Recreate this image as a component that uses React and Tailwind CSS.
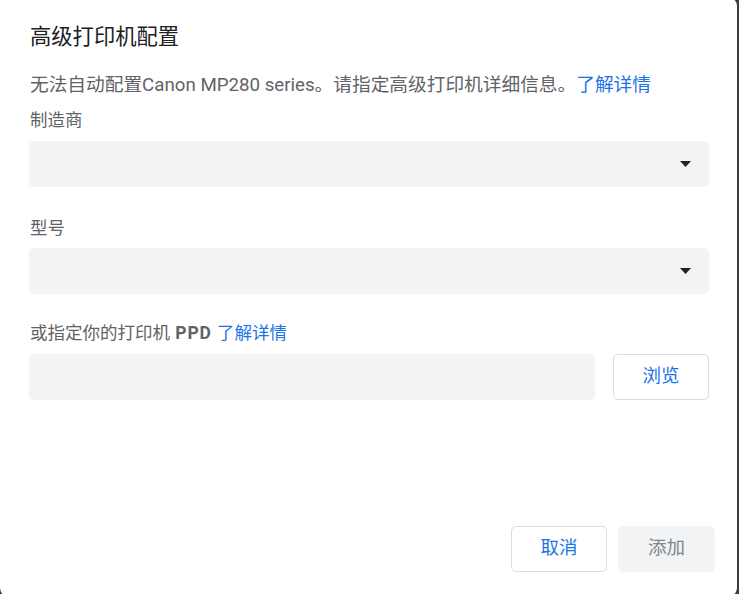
import React from "react";

const FONT = { fontFamily: 'Roboto, "Noto Sans CJK SC", "Noto Sans", sans-serif' };

function Caret() {
  return (
    <svg width="11" height="6" viewBox="0 0 11 6" className="shrink-0">
      <path d="M0 0h11L5.5 6z" fill="#202124" />
    </svg>
  );
}

function SelectBox() {
  return (
    <div className="flex h-[46px] items-center justify-end rounded-[5px] bg-[#f1f3f4] pr-[18px]">
      <Caret />
    </div>
  );
}

function Label({ children, className = "" }) {
  return (
    <div className={`h-[24px] text-[17.5px] leading-[24px] text-[#5f6368] ${className}`}>
      {children}
    </div>
  );
}

export default function App() {
  return (
    <div className="h-[594px] w-[739px] overflow-hidden bg-[#3c3c3c]" style={FONT}>
      <div className="flex h-[600px] w-[737px] -translate-y-[3px] flex-col rounded-[9px] rounded-tl-[4px] bg-white pt-[26px] pl-[29px] pr-[28px]">
        <h1 className="h-[28px] pl-[1px] text-[21.3px] leading-[28px] text-[#202124]">高级打印机配置</h1>

        <p className="mt-[21px] h-[26px] pl-[1px] text-[18.7px] leading-[26px] text-[#5f6368]">
          无法自动配置Canon MP280 series。请指定高级打印机详细信息。
          <span className="text-[#1a73e8]">了解详情</span>
        </p>

        <Label className="mt-[10px] pl-[1px]">制造商</Label>
        <div className="mt-[9px]">
          <SelectBox />
        </div>

        <Label className="mt-[29px] pl-[1px]">型号</Label>
        <div className="mt-[8px]">
          <SelectBox />
        </div>

        <Label className="mt-[27px] pl-[1px]">
          或指定你的打印机 <span className="mx-[1px] font-bold tracking-[0.8px]">PPD</span>{" "}
          <span className="text-[#1a73e8]">了解详情</span>
        </Label>
        <div className="mt-[9px] flex gap-[18px]">
          <div className="h-[46px] flex-1 rounded-[5px] bg-[#f1f3f4]" />
          <button className="h-[46px] w-[96px] rounded-[5px] border border-[#dadce0] bg-white text-[18.5px] text-[#1a73e8]">
            浏览
          </button>
        </div>

        <div className="mt-[126px] -mr-[6px] flex justify-end gap-[11px]">
          <button className="h-[46px] w-[96px] rounded-[5px] border border-[#dadce0] bg-white text-[18.5px] text-[#1a73e8]">
            取消
          </button>
          <button className="h-[46px] w-[97px] rounded-[5px] bg-[#f1f3f4] text-[18.5px] text-[#80868b]">
            添加
          </button>
        </div>
      </div>
    </div>
  );
}
